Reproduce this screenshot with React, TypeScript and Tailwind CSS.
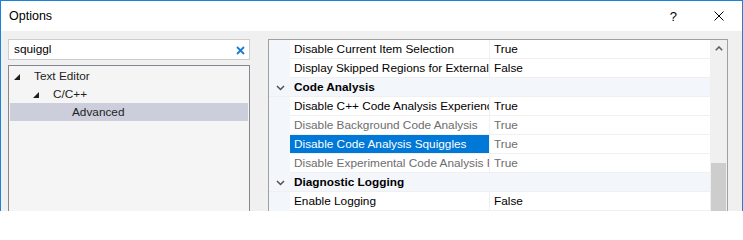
import React from 'react';

type Row =
  | { kind: 'cat'; label: string }
  | { kind: 'prop'; name: string; value: string; dim?: boolean; selected?: boolean };

const rows: Row[] = [
  { kind: 'prop', name: 'Disable Current Item Selection', value: 'True' },
  { kind: 'prop', name: 'Display Skipped Regions for External Dependencies', value: 'False' },
  { kind: 'cat', label: 'Code Analysis' },
  { kind: 'prop', name: 'Disable C++ Code Analysis Experience', value: 'True' },
  { kind: 'prop', name: 'Disable Background Code Analysis', value: 'True', dim: true },
  { kind: 'prop', name: 'Disable Code Analysis Squiggles', value: 'True', selected: true },
  { kind: 'prop', name: 'Disable Experimental Code Analysis Features', value: 'True', dim: true },
  { kind: 'cat', label: 'Diagnostic Logging' },
  { kind: 'prop', name: 'Enable Logging', value: 'False' },
];

function Expander() {
  return (
    <svg width="6" height="6" viewBox="0 0 6 6" className="shrink-0">
      <polygon points="6,0 6,6 0,6" fill="#1e1e1e" />
    </svg>
  );
}

function Chevron() {
  return (
    <svg width="9" height="6" viewBox="0 0 9 6">
      <polyline points="1,1 4.5,4.5 8,1" fill="none" stroke="#505050" strokeWidth="1.5" />
    </svg>
  );
}

function TreeRow({ indent, label, open, selected }: { indent: number; label: string; open?: boolean; selected?: boolean }) {
  return (
    <div className={`flex h-[18px] items-center pt-px ${selected ? 'bg-[#cccedb]' : ''}`} style={{ paddingLeft: indent }}>
      <div className="flex w-[14px] items-center">{open && <Expander />}</div>
      <span className="ml-[6px]">{label}</span>
    </div>
  );
}

export default function App() {
  return (
    <div className="h-[211px] w-[743px] overflow-hidden border-x border-t border-[#1883d7] bg-[#f0f0f0] text-[11.8px] leading-none text-[#1e1e1e] [font-family:'Liberation_Sans',Arial,sans-serif]">
      {/* title bar */}
      <div className="flex h-[30px] items-center bg-white">
        <span className="ml-[8px] text-[12.5px] text-black">Options</span>
        <span className="ml-auto mr-[37px] text-[13px] text-black">?</span>
        <svg width="10" height="10" viewBox="0 0 10 10" className="mr-[18px]">
          <path d="M0.5 0.5 L9.5 9.5 M9.5 0.5 L0.5 9.5" stroke="#000" strokeWidth="1" />
        </svg>
      </div>

      <div className="flex gap-[18px] pl-[7px] pt-[8px]">
        {/* left side */}
        <div className="flex w-[242px] flex-col gap-[5px]">
          <div className="flex h-[21px] items-center border border-[#cccccc] bg-white pl-[5px] pr-[4px] pt-px">
            <span className="text-black">squiggl</span>
            <svg width="9" height="9" viewBox="0 0 9 9" className="ml-auto">
              <path d="M1 1 L8 8 M8 1 L1 8" stroke="#1e7ad8" strokeWidth="1.8" />
            </svg>
          </div>
          <div className="h-[160px] border border-[#828790] bg-[#f5f5f5] px-px pt-px">
            <TreeRow indent={4} label="Text Editor" open />
            <TreeRow indent={23} label="C/C++" open />
            <TreeRow indent={42} label="Advanced" selected />
          </div>
        </div>

        {/* property grid */}
        <div className="flex h-[180px] w-[460px] border border-[#a0a0a0] bg-white">
          <div className="flex w-[441px] flex-col">
            {rows.map((r, i) =>
              r.kind === 'cat' ? (
                <div key={i} className="flex h-[19px] items-center border-b border-[#f0f0f0] bg-[#f3f6fb] pt-px">
                  <div className="flex w-[21px] justify-center pl-[2px]">
                    <Chevron />
                  </div>
                  <span className="pl-[4px] font-bold text-black">{r.label}</span>
                </div>
              ) : (
                <div key={i} className="flex h-[19px]">
                  <div className="w-[21px] shrink-0 bg-[#f3f6fb]" />
                  <div className="flex flex-1 border-b border-[#f0f0f0]">
                    <div
                      className={`flex w-[199px] shrink-0 items-center overflow-hidden whitespace-nowrap pl-[4px] pt-px ${
                        r.selected ? 'bg-[#0078d7] text-white' : r.dim ? 'text-[#6d6d6d]' : 'text-black'
                      }`}
                    >
                      {r.name}
                    </div>
                    <div className="w-px shrink-0 bg-[#f0f0f0]" />
                    <div
                      className={`flex flex-1 items-center pl-[4px] pt-px ${
                        r.dim || r.selected ? 'text-[#6d6d6d]' : 'text-black'
                      }`}
                    >
                      {r.value}
                    </div>
                  </div>
                </div>
              )
            )}
          </div>
          {/* scrollbar */}
          <div className="flex w-[17px] flex-col bg-[#f0f0f0]">
            <div className="flex h-[17px] items-center justify-center">
              <svg width="8" height="5" viewBox="0 0 8 5">
                <polyline points="0.8,4.2 4,1 7.2,4.2" fill="none" stroke="#606060" strokeWidth="1.6" />
              </svg>
            </div>
            <div className="mx-px mt-[106px] flex-1 bg-[#cdcdcd]" />
          </div>
        </div>
      </div>
    </div>
  );
}
